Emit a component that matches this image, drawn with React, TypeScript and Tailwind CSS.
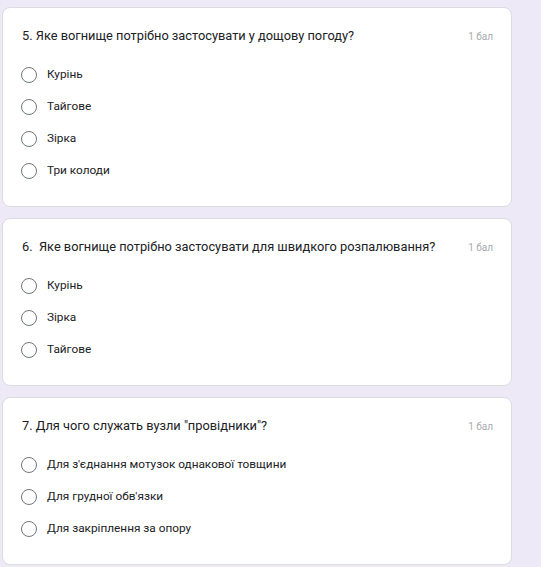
import React from 'react';

interface Question {
  title: string;
  options: string[];
}

const questions: Question[] = [
  {
    title: '5. Яке вогнище потрібно застосувати у дощову погоду?',
    options: ['Курінь', 'Тайгове', 'Зірка', 'Три колоди'],
  },
  {
    title: '6.  Яке вогнище потрібно застосувати для швидкого розпалювання?',
    options: ['Курінь', 'Зірка', 'Тайгове'],
  },
  {
    title: '7. Для чого служать вузли "провідники"?',
    options: [
      "Для з'єднання мотузок однакової товщини",
      "Для грудної обв'язки",
      'Для закріплення за опору',
    ],
  },
];

const QuestionCard: React.FC<{ q: Question }> = ({ q }) => (
  <div className="w-[510px] bg-white border border-[#dadce0] rounded-lg pt-[18px] pb-[19px]">
    <div className="flex items-center h-5 pl-[19px] pr-[18px]">
      <p className="flex-1 text-[12.8px] text-[#202124] whitespace-pre">{q.title}</p>
      <span className="text-[10px] text-[#a8acb0]">1 бал</span>
    </div>
    <div className="mt-[13px] flex flex-col">
      {q.options.map((opt) => (
        <label key={opt} className="flex items-center h-8 pl-[18px]">
          <span className="w-4 h-4 rounded-full border-[1.5px] border-[#70757a] shrink-0" />
          <span className="ml-[10px] text-[11.8px] text-[#202124]">{opt}</span>
        </label>
      ))}
    </div>
  </div>
);

export default function App() {
  return (
    <div
      className="w-[541px] h-[567px] overflow-hidden bg-[#ede9f7] pt-[7px] pl-[2px] flex flex-col gap-[11px]"
      style={{ fontFamily: 'Roboto, "Noto Sans", sans-serif' }}
    >
      {questions.map((q) => (
        <QuestionCard key={q.title} q={q} />
      ))}
    </div>
  );
}
